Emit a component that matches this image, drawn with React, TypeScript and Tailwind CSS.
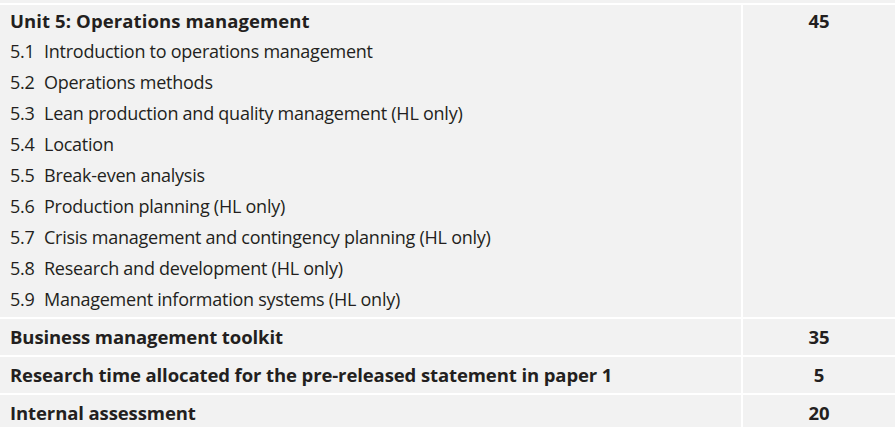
const topics = [
  ["5.1", "Introduction to operations management"],
  ["5.2", "Operations methods"],
  ["5.3", "Lean production and quality management (HL only)"],
  ["5.4", "Location"],
  ["5.5", "Break-even analysis"],
  ["5.6", "Production planning (HL only)"],
  ["5.7", "Crisis management and contingency planning (HL only)"],
  ["5.8", "Research and development (HL only)"],
  ["5.9", "Management information systems (HL only)"],
];

const rows = [
  ["Business management toolkit", "35"],
  ["Research time allocated for the pre-released statement in paper 1", "5"],
  ["Internal assessment", "20"],
];

const App = () => {
  return (
    <div
      className="w-[895px] h-[427px] overflow-hidden bg-[#f2f2f2] pt-[3px] text-[#231f20]"
      style={{ fontFamily: "'Open Sans', 'Noto Sans', sans-serif" }}
    >
      {/* Unit 5 block */}
      <div className="flex border-t-2 border-white">
        <div className="w-[743px] shrink-0 border-r-2 border-white pl-[10px] pb-[2px]">
          <div className="h-[31px] flex items-center text-[18.5px] font-bold tracking-[0.1px]">
            Unit 5: Operations management
          </div>
          {topics.map(([n, t]) => (
            <div key={n} className="h-[31px] flex items-center text-[18px] tracking-[-0.25px]">
              <span className="w-[34px] shrink-0">{n}</span>
              <span>{t}</span>
            </div>
          ))}
        </div>
        <div className="flex-1 text-center">
          <div className="h-[31px] flex items-center justify-center text-[18.5px] font-bold">45</div>
        </div>
      </div>

      {/* Other rows */}
      {rows.map(([label, hours]) => (
        <div key={label} className="flex h-[38px] border-t-2 border-white">
          <div className="w-[743px] shrink-0 border-r-2 border-white pl-[10px] flex items-center text-[18.5px] font-bold tracking-[-0.1px]">
            {label}
          </div>
          <div className="flex-1 flex items-center justify-center text-[18.5px] font-bold">
            {hours}
          </div>
        </div>
      ))}
    </div>
  );
};

export default App;
